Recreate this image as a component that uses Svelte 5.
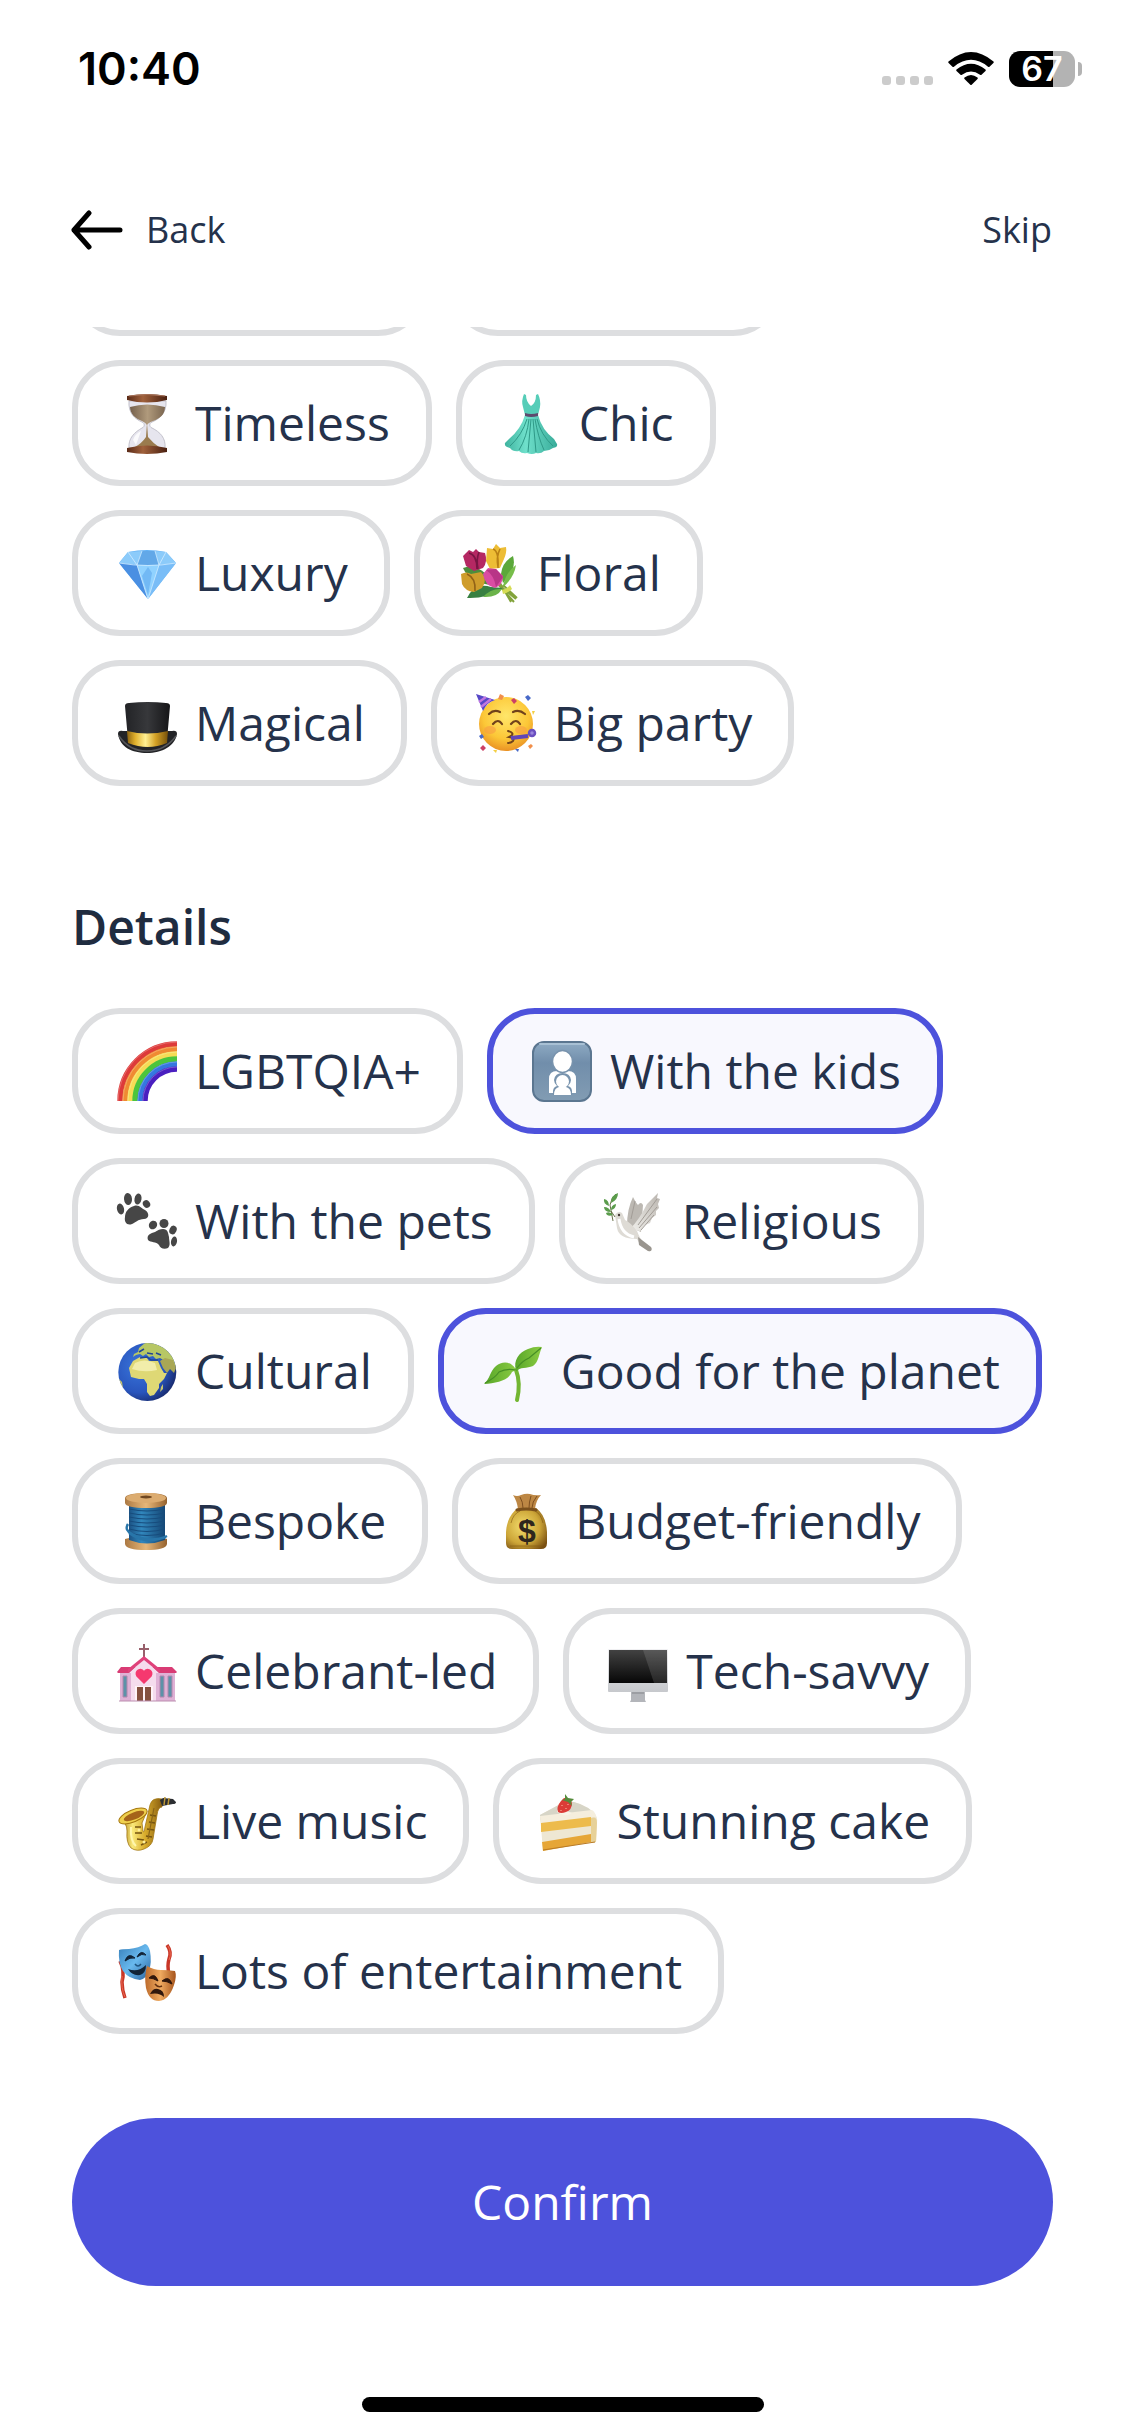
<script lang="ts">
  type Option = {
    icon: string;
    label: string;
  };

  const styles: Option[] = [
    { icon: "hourglass", label: "Timeless" },
    { icon: "dress", label: "Chic" },
    { icon: "gem", label: "Luxury" },
    { icon: "bouquet", label: "Floral" },
    { icon: "hat", label: "Magical" },
    { icon: "party", label: "Big party" },
  ];

  const details: Option[] = [
    { icon: "rainbow", label: "LGBTQIA+" },
    { icon: "kids", label: "With the kids" },
    { icon: "paws", label: "With the pets" },
    { icon: "dove", label: "Religious" },
    { icon: "globe", label: "Cultural" },
    { icon: "seedling", label: "Good for the planet" },
    { icon: "thread", label: "Bespoke" },
    { icon: "money", label: "Budget-friendly" },
    { icon: "church", label: "Celebrant-led" },
    { icon: "desktop", label: "Tech-savvy" },
    { icon: "sax", label: "Live music" },
    { icon: "cake", label: "Stunning cake" },
    { icon: "masks", label: "Lots of entertainment" },
  ];

  // widths of the chips that are scrolled under the header
  const scrolledWidths = [354, 331];
  const rainbowColors = ["#dd3a3a", "#f08a32", "#f6dc55", "#4cc53c", "#3577e0", "#4a1fc0"];
  const battery = 67;

  let selected = $state(["With the kids", "Good for the planet"]);

  const toggle = (label: string) => {
    if (selected.includes(label)) {
      selected = selected.filter((item) => item !== label);
    } else {
      selected = [...selected, label];
    }
  };
</script>

{#snippet emoji(name: string)}
  <svg class="emoji" viewBox="-3 0 66 60" aria-hidden="true">
    {#if name === "hourglass"}
      <defs>
        <linearGradient id="hg-wood" x1="0" x2="1">
          <stop offset="0" stop-color="#5a2a17" />
          <stop offset="0.4" stop-color="#a0613c" />
          <stop offset="1" stop-color="#4a2010" />
        </linearGradient>
        <linearGradient id="hg-sand" x1="0" x2="1">
          <stop offset="0" stop-color="#75604c" />
          <stop offset="0.5" stop-color="#b09a7c" />
          <stop offset="1" stop-color="#7b6650" />
        </linearGradient>
      </defs>
      <path d="M12 8h37c1 12-7 18-14 21-3 1-3 5 0 6 8 4 14 10 13 20H12c-1-10 6-16 13-20 3-1 3-5 0-6C18 26 11 20 12 8z" fill="#e6e5ee" stroke="#c3c2cc" />
      <path d="M13 14q17-5 35 0c0 8-6 12-12 14q-5 2-6 4-1-2-5-4C19 26 13 21 13 14z" fill="url(#hg-sand)" />
      <path d="M30 30l1 14q5 6 11 10H18q7-4 11-10z" fill="#9a7b4e" />
      <path d="M16 47q2-6 8-9l-5 14z" fill="#fff" opacity="0.8" />
      <path d="M10 3q20-4 40 0v4q-20 5-40 0z" fill="url(#hg-wood)" />
      <path d="M12 3q18-3 36 0" stroke="#a8735a" fill="none" />
      <path d="M10 55q20-5 40 0v4q-20 4-40 0z" fill="url(#hg-wood)" />
    {:else if name === "dress"}
      <defs>
        <linearGradient id="dr-skirt" x1="0" x2="1">
          <stop offset="0" stop-color="#3fb39f" />
          <stop offset="0.4" stop-color="#6fe0cb" />
          <stop offset="1" stop-color="#38ab99" />
        </linearGradient>
      </defs>
      <path d="M23 1q-3 7-1 13l2 8h13l2-8q1-7-2-13l-2 1q0 8-5 11-5-4-5-11z" fill="#56cdb8" />
      <path d="M24 22h13Q41 37 53 46L56 51Q57 54 52 55 48 58 43 58 40 61 35 60 31 62 26 60 21 61 18 58 12 59 9 55 3 54 4 50L8 46Q20 36 24 22z" fill="url(#dr-skirt)" />
      <path d="M26 26Q21 42 9 53M28 26Q26 44 18 57M30 26L27 59M32 26L35 59M34 26Q37 44 43 57M36 26Q40 42 52 53" stroke="#2f9a88" fill="none" />
      <path d="M24 20q6 2 13 0v3q-7 2-13 0z" fill="#5d4a6e" />
    {:else if name === "gem"}
      <path d="M11 9q19-4 38 0l10 11-28 36L2 20z" fill="#63b2f6" />
      <path d="M11 9L2 20l18 2 5-14zM49 9l10 11-17 2-4-14z" fill="#8ccbfa" />
      <path d="M25 8h13l4 14H20z" fill="#62a8e8" />
      <path d="M2 20l18 2 11 34z" fill="#4a8fe2" />
      <path d="M59 20l-17 2-11 34z" fill="#79bdf7" />
      <path d="M20 22h22L31 56z" fill="#90d2ff" />
      <path d="M25 8l-5 14-9-13M38 8l4 14 7-13M2 20q29 5 57 0M20 22l11 34 11-34" stroke="#d2ecff" stroke-width="0.8" fill="none" />
      <path d="M31 24l4 6-4 22-6-19z" fill="#5fa9ef" opacity="0.6" />
    {:else if name === "bouquet"}
      <path d="M40 42L57 56M41 40L52 59M44 42l14 13M38 40l17 19" stroke="#82a33b" stroke-width="2" />
      <path d="M54 13q-11 6-12 18l2 9q14-13 10-27z" fill="#5ba83a" />
      <path d="M57 22q-11 8-13 22 11-9 13-22z" fill="#77bd4a" />
      <path d="M8 55q8-16 24-11l12 1Q27 56 8 55z" fill="#388042" />
      <path d="M24 54q8-9 19-8-5 9-19 8z" fill="#6bb34a" />
      <path d="M4 25q11-4 22 5l8 12Q11 41 4 25z" fill="#4d8d3d" />
      <path d="M4 13l3-3 3-3 4 2 3-3 3 3 6 1q3 9-2 15l-9 3-8-5z" fill="#b52863" />
      <path d="M10 10q8 2 8 16M20 9q-3 8-1 17" stroke="#791543" stroke-width="1.6" fill="none" />
      <path d="M28 5l6 1 3-5 4 4 6-1q1 5-2 12l-4 9-10 1-4-8z" fill="#edbd35" />
      <path d="M34 6q6 2 5 19M41 6q-4 8-2 18" stroke="#b98115" stroke-width="1.6" fill="none" />
      <path d="M2 31q6-3 10 0l10-2q7 7 1 16l-8 4q-9-1-12-8z" fill="#cf9d2c" />
      <path d="M8 31q9 4 8 17" stroke="#916217" stroke-width="1.6" fill="none" />
      <path d="M24 31l5-6 8 1 7 7q0 9-8 12-10-2-12-14z" fill="#d94ca3" />
      <path d="M27 27q8 5 10 17l7-10-7-8z" fill="#b83587" />
      <path d="M43 47q5-1 8-5l2 4q-4 4-9 5z" fill="#d6dc55" />
    {:else if name === "hat"}
      <defs>
        <linearGradient id="hat-gold" x1="0" x2="1">
          <stop offset="0" stop-color="#8b6210" />
          <stop offset="0.2" stop-color="#e0b02c" />
          <stop offset="0.45" stop-color="#fff092" />
          <stop offset="0.7" stop-color="#d3a125" />
          <stop offset="1" stop-color="#75500b" />
        </linearGradient>
        <linearGradient id="hat-felt" x1="0" x2="1">
          <stop offset="0" stop-color="#222326" />
          <stop offset="0.5" stop-color="#37383b" />
          <stop offset="1" stop-color="#151517" />
        </linearGradient>
      </defs>
      <path d="M1 41q0-4 5-3h49q5-1 5 3c-2 12-15 19-30 19S3 54 1 41z" fill="#222326" />
      <path d="M8 13q0-3 4-3 19-2 37 0 4 0 4 3l-3 34H11z" fill="url(#hat-felt)" />
      <path d="M10 38q20 5 41 0l-1 12q-19 8-39 0z" fill="url(#hat-gold)" />
      <path d="M2 43q10 15 28 15t29-15" stroke="#55565a" stroke-width="1.5" fill="none" />
    {:else if name === "party"}
      <defs>
        <radialGradient id="pt-face" cx="0.5" cy="0.35" r="0.65">
          <stop offset="0" stop-color="#ffe66a" />
          <stop offset="0.65" stop-color="#fcc737" />
          <stop offset="1" stop-color="#ea9225" />
        </radialGradient>
      </defs>
      <circle cx="30" cy="31" r="27" fill="url(#pt-face)" />
      <ellipse cx="14" cy="37" rx="6" ry="4" fill="#f79b45" opacity="0.6" />
      <ellipse cx="45" cy="37" rx="6" ry="4" fill="#f79b45" opacity="0.6" />
      <path d="M13 21q5-5 11-2M37 19q6-3 12 2M17 31q5-6 9 0M35 31q5-6 9 0" stroke="#70421b" stroke-width="2.2" fill="none" stroke-linecap="round" />
      <path d="M32 38q7 2 3 5l-2 1q6 1 4 4-2 2-5 2" stroke="#70421b" stroke-width="2" fill="none" stroke-linecap="round" />
      <path d="M35 45l17-2" stroke="#6245b7" stroke-width="4" />
      <circle cx="56" cy="40" r="3" stroke="#6a4fc0" stroke-width="2.5" fill="#9a86dd" />
      <path d="M0 1l19 6q-8 2-12 11z" fill="#5648c7" />
      <path d="M3 9l7-5M5 14l10-8" stroke="#c177e0" stroke-width="2.4" />
      <path d="M24 1l4 2-2 4-4-1zM52 53l3-2 2 2-3 3z" fill="#f18f4b" />
      <path d="M35 7l3-2 3 3-3 3zM4 55l3-3 3 3-3 3z" fill="#cc4066" />
      <path d="M49 4l3-2 3 3-3 3zM3 43l3-2 2 3-3 2zM39 56l4 0-1 3z" fill="#4869c8" />
      <path d="M56 18l3 0-2 4zM17 57l4 0-1 3z" fill="#f4cf43" />
    {:else if name === "rainbow"}
      {#each rainbowColors as color, i}
        {@const radius = 57 - i * 5}
        <path d="M{60 - radius} 60A{radius} {radius} 0 0 1 60 {60 - radius}" stroke={color} stroke-width="5.4" fill="none" />
      {/each}
      <path d="M1 60A59 59 0 0 1 60 1M6 60A54 54 0 0 1 60 6M11 60A49 49 0 0 1 60 11M21 60A39 39 0 0 1 60 21M26 60A34 34 0 0 1 60 26" stroke="#fff" stroke-width="0.8" opacity="0.3" fill="none" />
    {:else if name === "kids"}
      <defs>
        <linearGradient id="kd-tile" x1="0" y1="0" x2="0" y2="1">
          <stop offset="0" stop-color="#8fabc4" />
          <stop offset="0.35" stop-color="#718eab" />
          <stop offset="1" stop-color="#829cb3" />
        </linearGradient>
      </defs>
      <rect x="1" y="1" width="58" height="59" rx="11" fill="url(#kd-tile)" stroke="#5b7690" stroke-width="2" />
      <path d="M8 3h44" stroke="#a8c0d4" stroke-width="2" stroke-linecap="round" />
      <path d="M17 52V38q0-8 8-8h11q8 0 8 8v14z" fill="#fff" />
      <ellipse cx="30.500" cy="20.500" rx="10" ry="11" fill="#fff" stroke="#7893ad" stroke-width="1.500" />
      <path d="M21 54q-1-8 4-9-3-3-3-6 1-7 8.500-7t8.500 7q0 3-3 6 5 1 4 9z" fill="#7893ad" />
      <path d="M22 54q0-7 5-8h7q5 1 5 8z" fill="#fff" />
      <circle cx="30.500" cy="40.500" r="6.500" fill="#fff" />
    {:else if name === "paws"}
      <g fill="#464646">
        <ellipse cx="3.500" cy="18" rx="3.500" ry="5.500" transform="rotate(-15 3.500 18)" />
        <ellipse cx="11" cy="8" rx="4" ry="6" transform="rotate(-5 11 8)" />
        <ellipse cx="21" cy="8" rx="3.500" ry="5.500" transform="rotate(10 21 8)" />
        <ellipse cx="29.500" cy="13" rx="3.500" ry="4" transform="rotate(-35 29.500 13)" />
        <path d="M17 15c5-2 8 3 11 4 5 3 4 9-1 9-6 0-9 4-12 5-5 2-8-2-7-7 0-5 3-9 9-11z" />
        <ellipse cx="36" cy="34" rx="4" ry="4.500" transform="rotate(35 36 34)" />
        <ellipse cx="47" cy="32.500" rx="4.500" ry="4.500" />
        <ellipse cx="56" cy="39" rx="3.500" ry="4.500" transform="rotate(25 56 39)" />
        <ellipse cx="57" cy="50.500" rx="3" ry="5" transform="rotate(10 57 50.500)" />
        <path d="M46 38c5 0 5 4 6 8 0 4 2 8-1 11-4 2-8 0-9-3-3-4-8-2-11-5-2-5 3-7 7-8 3-2 5-3 8-3z" />
      </g>
    {:else if name === "dove"}
      <defs>
        <linearGradient id="dv-wing" x1="0" y1="1" x2="1" y2="0">
          <stop offset="0" stop-color="#f1f0ec" />
          <stop offset="1" stop-color="#b9b4ae" />
        </linearGradient>
      </defs>
      <path d="M23 35q0-17 6-29 3 6 5 8 3-4 5 0l-2 27z" fill="#bcb8b2" />
      <path d="M26 38q9-9 17-25L54 2l-1 5 3 1-2 5 1 4-3 3v4l-4 3-2 5-5 2-5 6z" fill="url(#dv-wing)" />
      <path d="M34 34L53 8M35 37l18-21M37 39l13-15M27 28l4-18" stroke="#a29d97" fill="none" />
      <path d="M11 24q3-5 7-2l3 7q5 2 12 11 3 8 7 12l8 5q0 4-4 3l-7-5-4-7Q15 48 13 37z" fill="#dedbd5" />
      <path d="M15 28q2 15 15 18" stroke="#fff" stroke-width="3" fill="none" />
      <path d="M34 46l13 10q2 5-3 4l-9-6z" fill="#99958f" />
      <circle cx="15" cy="24" r="1.200" fill="#433936" />
      <path d="M11 26L7 20M9 30L6 14q1-7 6-11" stroke="#68714a" fill="none" />
      <path d="M7 12q0-8 7-10 0 7-7 10zM5 15q-6-2-5-7 5 1 5 7zM7 21q-7 0-7-5 5 0 7 5zM7 19q0-5 5-6 0 5-5 6zM9 24q-6 2-7-2 4-2 7 2z" fill="#5b9c4c" />
    {:else if name === "globe"}
      <defs>
        <radialGradient id="gl-sea" cx="0.35" cy="0.4" r="0.7">
          <stop offset="0" stop-color="#3975db" />
          <stop offset="0.65" stop-color="#2955bd" />
          <stop offset="1" stop-color="#172869" />
        </radialGradient>
        <clipPath id="gl-clip"><circle cx="30.300" cy="31" r="29" /></clipPath>
      </defs>
      <circle cx="30.300" cy="31" r="29" fill="url(#gl-sea)" />
      <g clip-path="url(#gl-clip)">
        <path d="M17 13l4-2 1-4 6-5 9 0 11 5 8 9 3 10-4-2-3-5-4 1-5-3-4 1-3-3-4 1-3-3-3 2-3-2-4 1-3 2z" fill="#b7c765" />
        <path d="M43 20l5-3 8 2 3 8-2 5-4-4-3 4-4-5z" fill="#a9a755" />
        <path d="M12 27l4-7 7-4 7 1 2 3 9 0 3 7 3 5 3 0-3 6-5 5 0 4-5 7-4 1-3-4 0-8-3-5-5 0-8-2z" fill="#ded875" />
        <path d="M18 22q9-5 20 0l2 7q-13 3-25-1z" fill="#f1edaa" />
        <path d="M44 46l2-3 0 5-3 3zM0 36l5 5 1 6-4 6-6-3z" fill="#c8c56d" />
        <path d="M23 17l7-1 4 3 7 0M22 11l5-3M30 12l6 1M39 12l5 2" stroke="#214597" stroke-width="1.500" fill="none" />
      </g>
    {:else if name === "seedling"}
      <defs>
        <linearGradient id="sd-leaf" x1="0" x2="1">
          <stop offset="0" stop-color="#58a629" />
          <stop offset="1" stop-color="#8bcc43" />
        </linearGradient>
      </defs>
      <path d="M33 29q5 13 1 30" stroke="#73b632" stroke-width="4" stroke-linecap="round" fill="none" />
      <path d="M34 31C29 19 19 20 13 25 7 30 7 38 1 43 13 42 25 40 29 31q3-2 5 0z" fill="url(#sd-leaf)" />
      <path d="M33 29C30 20 36 11 45 8q7-3 14-2c-3 6-3 15-9 19-6 3-13 0-17 6z" fill="url(#sd-leaf)" />
      <path d="M2 42q10-5 14-11 7-4 17-2M34 27q5-7 12-10l12-10" stroke="#468e26" stroke-width="1.200" fill="none" />
    {:else if name === "thread"}
      <defs>
        <linearGradient id="th-blue" x1="0" x2="1">
          <stop offset="0" stop-color="#1b5284" />
          <stop offset="0.35" stop-color="#3187bd" />
          <stop offset="1" stop-color="#154775" />
        </linearGradient>
        <linearGradient id="th-wood" x1="0" x2="1">
          <stop offset="0" stop-color="#ac7943" />
          <stop offset="0.5" stop-color="#e6b779" />
          <stop offset="1" stop-color="#96632f" />
        </linearGradient>
      </defs>
      <path d="M8 48q21-7 42 0v5q-1 6-21 6T8 53z" fill="url(#th-wood)" />
      <path d="M12 12h36v37q-18 7-36 0z" fill="url(#th-blue)" />
      <path d="M12 18q18 4 36 0M12 22q18 4 36 0M12 26q18 4 36 0M12 30q18 4 36 0M12 34q18 4 36 0M12 38q18 5 36 0M12 42q18 5 36 0" stroke="#174c7d" fill="none" />
      <path d="M11 33q-4 6 4 10 17 9 34 3M12 42q18 13 38 3" stroke="#2875a9" stroke-width="2.400" fill="none" />
      <path d="M8 7q1-5 21-5t21 5v5q-1 5-21 5T8 12z" fill="url(#th-wood)" />
      <ellipse cx="29" cy="7" rx="20" ry="5" fill="#dcac70" />
      <ellipse cx="29" cy="6" rx="6" ry="1.500" fill="#704720" />
    {:else if name === "money"}
      <defs>
        <radialGradient id="mn-bag" cx="0.4" cy="0.45" r="0.7">
          <stop offset="0" stop-color="#f2dc6c" />
          <stop offset="0.6" stop-color="#cda638" />
          <stop offset="1" stop-color="#7a5012" />
        </radialGradient>
      </defs>
      <path d="M21 17h18q10 7 11 24v11q0 6-6 6H15q-6 0-6-6V41q1-16 12-24z" fill="url(#mn-bag)" />
      <path d="M16 4q4 2 8 0 5-2 9-1 5 2 11 1-5 5-6 14H21Q20 10 16 4z" fill="#bd8744" />
      <path d="M23 6q3 5 3 11M34 5q-2 6-2 12M40 5q-5 6-5 12" stroke="#7e4f20" fill="none" />
      <path d="M20 19q9-2 19 0" stroke="#7b501c" stroke-width="3" stroke-linecap="round" />
      <path d="M14 32q2-9 9-12M46 32q-2-9-8-12M13 55h33" stroke="#80570f" fill="none" opacity="0.6" />
      <text class="dollar" x="30" y="51" text-anchor="middle">$</text>
    {:else if name === "church"}
      <path d="M27 3v14M22 8h10" stroke="#98606b" stroke-width="2" />
      <path d="M3 30h55v30H3z" fill="#dfb1d5" />
      <path d="M4 26h51l5 5-1 1H1l-1-1z" fill="#d93b74" />
      <path d="M12 32l15-14 15 14h-3v28H14V32z" fill="#f5dced" />
      <path d="M11 32v-4l16-13 16 13v4L27 19z" fill="#df427b" />
      <path d="M27 42l-7-7c-3-5 4-9 7-4 3-5 10-1 7 4z" fill="#f5396f" stroke="#f5396f" stroke-width="1.500" />
      <path d="M6 35h4v21H6zM43 35h4v21h-4zM51 35h4v21h-4z" fill="#5c92a8" stroke="#b486ae" />
      <path d="M18 45h18v15H18z" fill="#fff3f7" />
      <path d="M20 46h6v14h-6zM28 46h6v14h-6z" fill="#85513f" />
      <path d="M2 60h57" stroke="#bb8daf" />
    {:else if name === "desktop"}
      <defs>
        <linearGradient id="dt-metal" x1="0" y1="0" x2="0" y2="1">
          <stop offset="0" stop-color="#f0f0f2" />
          <stop offset="1" stop-color="#c6c8cc" />
        </linearGradient>
        <linearGradient id="dt-screen" x1="0" y1="0" x2="0" y2="1">
          <stop offset="0" stop-color="#424242" />
          <stop offset="1" stop-color="#070707" />
        </linearGradient>
      </defs>
      <path d="M23 50h14v9l1 2H22l1-2z" fill="#b3b5ba" />
      <rect y="8" width="60" height="43" rx="1" fill="url(#dt-metal)" />
      <rect x="1" y="9" width="58" height="33" fill="url(#dt-screen)" />
      <path d="M35 9h24v33H46z" fill="#fff" opacity="0.12" />
      <path d="M24 52h12" stroke="#85878c" />
    {:else if name === "sax"}
      <defs>
        <linearGradient id="sx-brass" x1="0" x2="1">
          <stop offset="0" stop-color="#a5770f" />
          <stop offset="0.3" stop-color="#fae97a" />
          <stop offset="0.6" stop-color="#d8ab2b" />
          <stop offset="1" stop-color="#8a5f10" />
        </linearGradient>
      </defs>
      <path d="M3 30Q10 31 10 40 9 52 14 57 20 61 27 58 35 55 36 48L40 24Q41 16 45 16V8Q35 6 33 14L28 36Q27 43 26 40L25 32 30 20z" fill="url(#sx-brass)" stroke="#a17613" stroke-width="0.800" />
      <path d="M14 36q-1 14 5 19" stroke="#fff6ae" stroke-width="2" fill="none" />
      <ellipse cx="16" cy="25" rx="15" ry="6" transform="rotate(-22 16 25)" fill="#efd04d" stroke="#a5760d" />
      <ellipse cx="17" cy="25" rx="11" ry="3.500" transform="rotate(-22 17 25)" fill="#a5641a" />
      <path d="M18 36h6M18 42h7M20 48l7 1M24 54l6-3M33 24l6 1M32 31l6 1M30 38l7 1M29 45l6 1" stroke="#765511" stroke-width="1.500" />
      <path d="M37 17l-6 31" stroke="#8a6516" stroke-width="1.200" />
      <circle cx="27" cy="51" r="1.500" fill="#fff09b" />
      <circle cx="22" cy="39" r="1.500" fill="#fff09b" />
      <path d="M43 9l3-2 10 1 3 3q0 2-3 2l-11 2z" fill="#2c2e32" />
      <path d="M48 6l-1 8M52 7l-1 7" stroke="#bd9736" stroke-width="1.500" />
    {:else if name === "cake"}
      <path d="M2 24L28 10q16 1 27 11 5 4 4 11l-1 19L5 60z" fill="#eee7d3" />
      <path d="M2 24L28 10q16 1 27 11L3 31z" fill="#d7d5c7" />
      <path d="M2 25l52-6q4 3 4 7L3 33z" fill="#f5eedd" />
      <path d="M3 32l50-6v9L3 41z" fill="#edbb4c" />
      <path d="M4 51l49-8v8L5 60z" fill="#e6a637" />
      <path d="M53 27q6-2 6 5l-1 19-5 1z" fill="#e7d198" />
      <path d="M5 59l52-8" stroke="#b97a24" />
      <path d="M21 17q-2 3-2 4 8 6 15 1z" fill="#f8f3e6" />
      <path d="M20 21q-2-5 3-11l3-3q6 0 8 5 0 7-6 9-5 2-8 0z" fill="#db3c37" />
      <path d="M24 9l3-1 0-5 3 4 6 1-3 3 1 4-4-4z" fill="#558b3b" />
      <path d="M24 14v1M28 17v1M23 19v1M30 13v1" stroke="#ffc0a8" />
    {:else if name === "masks"}
      <defs>
        <linearGradient id="mk-blue" x1="0" y1="0" x2="1" y2="1">
          <stop offset="0" stop-color="#367eb8" />
          <stop offset="0.5" stop-color="#69b9ee" />
          <stop offset="1" stop-color="#285f9a" />
        </linearGradient>
        <linearGradient id="mk-orange" x1="0" x2="1">
          <stop offset="0" stop-color="#bd6b2c" />
          <stop offset="0.5" stop-color="#efaa60" />
          <stop offset="1" stop-color="#a6541c" />
        </linearGradient>
      </defs>
      <path d="M3 20q5 10 2 21 0 8 3 16M50 4q5 7 2 14-2 7 0 15" stroke="#c83627" stroke-width="3.500" fill="none" />
      <path d="M51 5q4 7 1 14M5 35q-1 13 3 21" stroke="#ec6a52" fill="none" />
      <path d="M2 9q3-1 10-1Q22 7 28 3q3 0 5 7 2 11-1 20-3 8-9 9Q12 38 6 30 1 22 2 9z" fill="url(#mk-blue)" />
      <path d="M8 20q3-9 10-3-5-1-10 3zM20 16q4-8 9-2-4-2-9 2z" fill="#112336" stroke="#112336" />
      <path d="M11 28q10 4 18-4 0 8-6 10-8 1-12-6z" fill="#112336" />
      <path d="M18 23q3 4 6 0" stroke="#215783" stroke-width="1.500" fill="none" />
      <path d="M30 25q7 4 14 4t14 1q2 5-1 14-5 15-15 16-10 0-13-13-2-12 1-22z" fill="url(#mk-orange)" />
      <path d="M32 37q6-6 9 3-5-3-9-3zM45 40q7-6 10 3-5-3-10-3z" fill="#30170c" stroke="#30170c" />
      <path d="M33 53q3-6 8-5 6 1 6 8-5-5-14-3z" fill="#30170c" />
      <path d="M38 43q3 4 7 2" stroke="#653010" stroke-width="1.500" fill="none" />
    {/if}
  </svg>
{/snippet}

{#snippet chipList(options: Option[])}
  <div class="chips">
    {#each options as option}
      <button
        type="button"
        class="chip"
        class:selected={selected.includes(option.label)}
        aria-pressed={selected.includes(option.label)}
        onclick={() => toggle(option.label)}
      >
        {@render emoji(option.icon)}
        <span>{option.label}</span>
      </button>
    {/each}
  </div>
{/snippet}

<div class="screen">
  <div class="status">
    <span class="time">10:40</span>
    <div class="indicators">
      <svg class="signal" viewBox="0 0 51 36" aria-hidden="true">
        <g fill="#ccc">
          <rect x="0" y="25" width="9" height="9" rx="3" />
          <rect x="14" y="25" width="9" height="9" rx="3" />
          <rect x="28" y="25" width="9" height="9" rx="3" />
          <rect x="42" y="25" width="9" height="9" rx="3" />
        </g>
      </svg>
      <svg class="wifi" viewBox="0 0 46 36" aria-hidden="true">
        <path d="M0.500 10.500Q23-8.500 45.500 10.500 46 11.200 45.400 12L41.500 15.800Q40.800 16.300 40 15.700 23 2 6 15.700 5.200 16.300 4.500 15.800L0.600 12Q0 11.200 0.500 10.500z" />
        <path d="M8.500 18.500Q23 7 37.500 18.500 38.200 19.200 37.500 20L33.500 23.800Q32.800 24.400 32 23.800 23 17 14 23.800 13.200 24.400 12.500 23.800L8.500 20Q7.800 19.200 8.500 18.500z" />
        <path d="M16.500 26.500Q23 21.500 29.500 26.500 30.200 27.200 29.500 28L23.700 33.700Q23 34.300 22.300 33.700L16.500 28Q15.800 27.200 16.500 26.500z" />
      </svg>
      <div class="battery">
        <span class="level" style={`--level: ${battery}%`}>{battery}</span>
        <span class="nub"></span>
      </div>
    </div>
  </div>

  <header>
    <button type="button" class="link">
      <svg class="arrow" viewBox="0 0 54 42" aria-hidden="true">
        <path d="M18 4L3 21l15 17M3 21h46" />
      </svg>
      Back
    </button>
    <button type="button" class="link">Skip</button>
  </header>

  <main>
    <div class="scrolled" aria-hidden="true">
      {#each scrolledWidths as width}
        <span class="chip" style={`width: ${width}px`}></span>
      {/each}
    </div>
    {@render chipList(styles)}
    <h2>Details</h2>
    {@render chipList(details)}
  </main>

  <footer>
    <button type="button" class="confirm">Confirm</button>
    <div class="home"></div>
  </footer>
</div>

<style>
  :global(body) {
    background: #fff;
  }

  .screen {
    min-height: 100vh;
    display: flex;
    flex-direction: column;
    color: #25324b;
    font-family: "Open Sans", "Noto Sans", sans-serif;
    font-size: 48px;
    line-height: 66px;
  }

  button {
    border: 0;
    margin: 0;
    padding: 0;
    background: none;
    color: inherit;
    font: inherit;
    cursor: pointer;
  }

  .status {
    display: flex;
    align-items: center;
    justify-content: space-between;
    padding: 36px 43px 36px 78px;
    color: #000;
    font-family: Inter, "Liberation Sans", sans-serif;
    font-weight: 600;
  }

  .time {
    font-size: 45px;
  }

  .indicators {
    display: flex;
    align-items: center;
    gap: 15px;
  }

  .signal {
    width: 51px;
    height: 36px;
  }

  .wifi {
    width: 46px;
    height: 36px;
  }

  .battery {
    display: flex;
    align-items: center;
    gap: 3px;
  }

  .level {
    width: 66px;
    height: 36px;
    border-radius: 11px;
    background: linear-gradient(to right, #000 var(--level), #b3b3b3 var(--level));
    color: #fff;
    font-size: 34px;
    line-height: 36px;
    text-align: center;
  }

  .nub {
    width: 4px;
    height: 14px;
    border-radius: 0 4px 4px 0;
    background: #b3b3b3;
  }

  header {
    display: flex;
    align-items: center;
    justify-content: space-between;
    padding: 68px 73px 73px 71px;
    font-size: 36px;
    line-height: 48px;
  }

  .link {
    display: flex;
    align-items: center;
    gap: 21px;
  }

  .arrow {
    width: 54px;
    height: 42px;
    fill: none;
    stroke: #000;
    stroke-width: 5;
    stroke-linecap: round;
    stroke-linejoin: round;
  }

  main {
    flex: 1;
    padding: 0 72px;
  }

  /* only the lower edge of these chips shows below the header */
  .scrolled {
    display: flex;
    align-items: flex-end;
    gap: 24px;
    height: 9px;
    margin-bottom: 24px;
    overflow: hidden;
  }

  .chips {
    display: flex;
    flex-wrap: wrap;
    gap: 24px;
  }

  .chip {
    display: flex;
    flex: none;
    align-items: center;
    gap: 15px;
    box-sizing: border-box;
    height: 126px;
    padding: 0 36px;
    border: 6px solid #dddee0;
    border-radius: 48px;
    background: #fff;
    white-space: nowrap;
  }

  .chip.selected {
    border-color: #4d52dc;
    background: #f8f8fe;
  }

  .emoji {
    width: 66px;
    height: 60px;
    overflow: visible;
  }

  .dollar {
    fill: #2e261d;
    font-family: "Liberation Sans", sans-serif;
    font-size: 32px;
    font-weight: 700;
  }

  h2 {
    margin: 108px 0 48px;
    color: #1f2c40;
    font-size: 48px;
    font-weight: 600;
  }

  footer {
    display: flex;
    flex-direction: column;
    align-items: center;
    padding: 84px 72px 24px;
  }

  .confirm {
    width: 100%;
    height: 168px;
    border-radius: 84px;
    background: #4d52dc;
    color: #fff;
  }

  .home {
    width: 402px;
    height: 15px;
    margin-top: 111px;
    border-radius: 8px;
    background: #000;
  }
</style>
